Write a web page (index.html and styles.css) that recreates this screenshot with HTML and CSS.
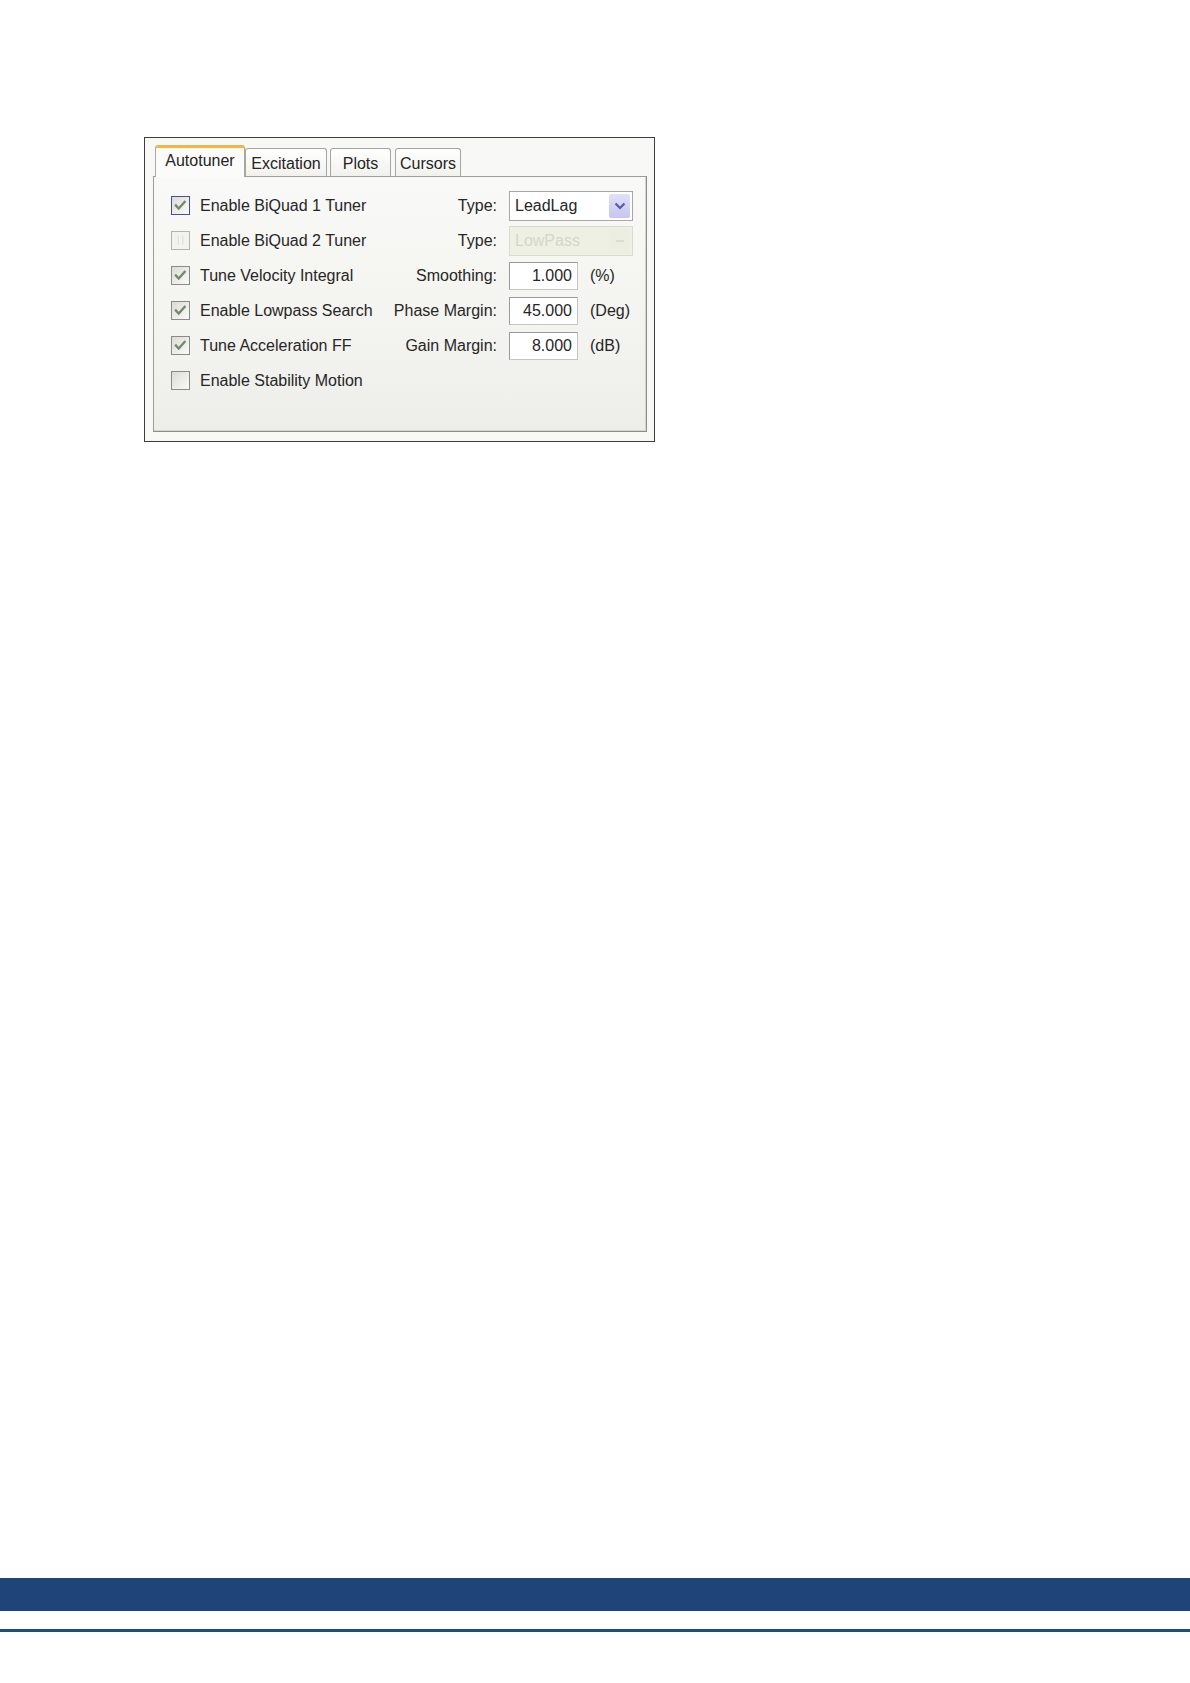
FILE: index.html
```html
<!DOCTYPE html>
<html>
<head>
<meta charset="utf-8">
<link rel="stylesheet" href="styles.css">
</head>
<body>
<div class="page">
  <div class="content">
    <div class="dialog">
      <div class="tabs">
        <div class="tab active">Autotuner</div>
        <div class="tab w-exc">Excitation</div>
        <div class="tab w-plots">Plots</div>
        <div class="tab w-cur">Cursors</div>
      </div>
      <div class="panel">
        <div class="grid">
          <span class="cb checked focus"><svg viewBox="0 0 19 19" width="17" height="17"><path d="M3.5 8.5 L7.5 12.8 L15 4.5" fill="none" stroke="#6f8a6f" stroke-width="2.6"/></svg></span>
          <span class="lbl">Enable BiQuad 1 Tuner</span>
          <span class="rlbl">Type:</span>
          <span class="combo"><span class="ctext">LeadLag</span><span class="cbtn"><svg viewBox="0 0 20 24" width="20" height="24"><path d="M5.5 9.5 L10 14 L14.5 9.5" fill="none" stroke="#5a5aa8" stroke-width="2.2"/></svg></span></span>

          <span class="cb disabled"><svg viewBox="0 0 19 19" width="17" height="17"><path d="M7 4 L7 14 M12 4 L12 14" fill="none" stroke="#dcdcd2" stroke-width="1"/></svg></span>
          <span class="lbl">Enable BiQuad 2 Tuner</span>
          <span class="rlbl">Type:</span>
          <span class="combo off"><span class="ctext">LowPass</span><span class="cbtn off"><svg viewBox="0 0 20 24" width="20" height="24"><path d="M6 12 L14 12" fill="none" stroke="#dcdcd0" stroke-width="2"/></svg></span></span>

          <span class="cb checked"><svg viewBox="0 0 19 19" width="17" height="17"><path d="M3.5 8.5 L7.5 12.8 L15 4.5" fill="none" stroke="#6f8a6f" stroke-width="2.6"/></svg></span>
          <span class="lbl">Tune Velocity Integral</span>
          <span class="rlbl">Smoothing:</span>
          <span class="input">1.000</span>
          <span class="unit">(%)</span>

          <span class="cb checked"><svg viewBox="0 0 19 19" width="17" height="17"><path d="M3.5 8.5 L7.5 12.8 L15 4.5" fill="none" stroke="#6f8a6f" stroke-width="2.6"/></svg></span>
          <span class="lbl">Enable Lowpass Search</span>
          <span class="rlbl">Phase Margin:</span>
          <span class="input">45.000</span>
          <span class="unit">(Deg)</span>

          <span class="cb checked"><svg viewBox="0 0 19 19" width="17" height="17"><path d="M3.5 8.5 L7.5 12.8 L15 4.5" fill="none" stroke="#6f8a6f" stroke-width="2.6"/></svg></span>
          <span class="lbl">Tune Acceleration FF</span>
          <span class="rlbl">Gain Margin:</span>
          <span class="input">8.000</span>
          <span class="unit">(dB)</span>

          <span class="cb"></span>
          <span class="lbl">Enable Stability Motion</span>
        </div>
      </div>
    </div>
  </div>
  <footer class="footer">
    <div class="band"></div>
    <div class="rule"></div>
  </footer>
</div>
</body>
</html>
```

FILE: styles.css
```css
html, body {
  margin: 0;
  padding: 0;
  background: #ffffff;
}
.page {
  width: 1190px;
  height: 1683px;
  display: flex;
  flex-direction: column;
  font-family: "Liberation Sans", Arial, sans-serif;
  font-size: 16px;
  color: #262626;
}
.content {
  height: 1578px;
  box-sizing: border-box;
  padding-top: 137px;
  padding-left: 144px;
}
.dialog {
  width: 511px;
  height: 305px;
  box-sizing: border-box;
  border: 1px solid #3e3e3e;
  background: #f8f8f6;
  padding: 7px 7px 9px 8px;
  display: flex;
  flex-direction: column;
}
.tabs {
  height: 31px;
  display: flex;
  align-items: flex-end;
  gap: 2px;
  padding-left: 2px;
  position: relative;
  z-index: 2;
}
.tab {
  box-sizing: border-box;
  height: 28px;
  border: 1px solid #a4a4a0;
  border-bottom: none;
  border-radius: 3px 3px 0 0;
  background: linear-gradient(#ffffff, #f1f1ec);
  display: flex;
  align-items: center;
  justify-content: center;
  padding-top: 2px;
  color: #242424;
}
.tab.active {
  width: 90px;
  height: 32px;
  margin-bottom: -1px;
  margin-right: -2px;
  border-color: #a8a8a0;
  border-top: 3px solid #f5b446;
  background: #fbfbf9;
  padding-top: 0;
  padding-bottom: 4px;
}
.w-exc { width: 82px; }
.w-plots { width: 61px; margin-left: 1px; }
.w-cur { width: 66px; margin-left: 2px; }
.panel {
  flex: 1;
  box-sizing: border-box;
  border: 1px solid #9c9c98;
  border-right-color: #8c8c88;
  border-bottom-color: #8c8c88;
  box-shadow: inset -1px -1px 0 #d4d4d0;
  background: linear-gradient(#f9f9f7, #f2f2ee 70%, #ededea);
  padding: 11px 0 0 17px;
  position: relative;
  z-index: 1;
}
.grid {
  display: grid;
  grid-template-columns: 19px 175px 132px 81px 55px;
  grid-auto-rows: 35px;
  align-items: center;
}
.cb {
  box-sizing: border-box;
  width: 19px;
  height: 19px;
  border: 1px solid #8a8a86;
  background: linear-gradient(135deg, #dcdcd6, #fafaf8);
  display: flex;
  align-items: center;
  justify-content: center;
  grid-column: 1;
}
.cb.focus {
  border-color: #4e4e8e;
}
.cb.disabled {
  border-color: #b4b4ac;
  background: #f2f2ee;
}
.lbl {
  grid-column: 2;
  padding-left: 10px;
  white-space: nowrap;
}
.rlbl {
  grid-column: 3;
  text-align: right;
  white-space: nowrap;
}
.combo {
  grid-column: 4 / span 2;
  margin-left: 12px;
  box-sizing: border-box;
  height: 30px;
  border: 1px solid #a8a8a8;
  background: #ffffff;
  display: flex;
  align-items: center;
  justify-content: space-between;
  padding: 2px 2px 2px 5px;
}
.combo.off {
  background: #eef0e4;
  border-color: #dadad0;
  color: #d4d6ca;
}
.cbtn {
  width: 21px;
  height: 24px;
  background: linear-gradient(#e0e0fa, #c6c6f0);
  border-radius: 2px;
  display: flex;
  align-items: center;
  justify-content: center;
}
.cbtn.off {
  background: #eceee2;
}
.input {
  grid-column: 4;
  margin-left: 12px;
  box-sizing: border-box;
  height: 28px;
  border: 1px solid #9a9a9a;
  border-right-color: #c4c4c4;
  border-bottom-color: #c4c4c4;
  background: #ffffff;
  text-align: right;
  padding-right: 5px;
  line-height: 26px;
}
.unit {
  grid-column: 5;
  padding-left: 12px;
  white-space: nowrap;
}
.footer {
  display: flex;
  flex-direction: column;
}
.band {
  height: 33px;
  background: #1f4479;
}
.rule {
  height: 3px;
  margin-top: 18px;
  background: #195083;
}
```
